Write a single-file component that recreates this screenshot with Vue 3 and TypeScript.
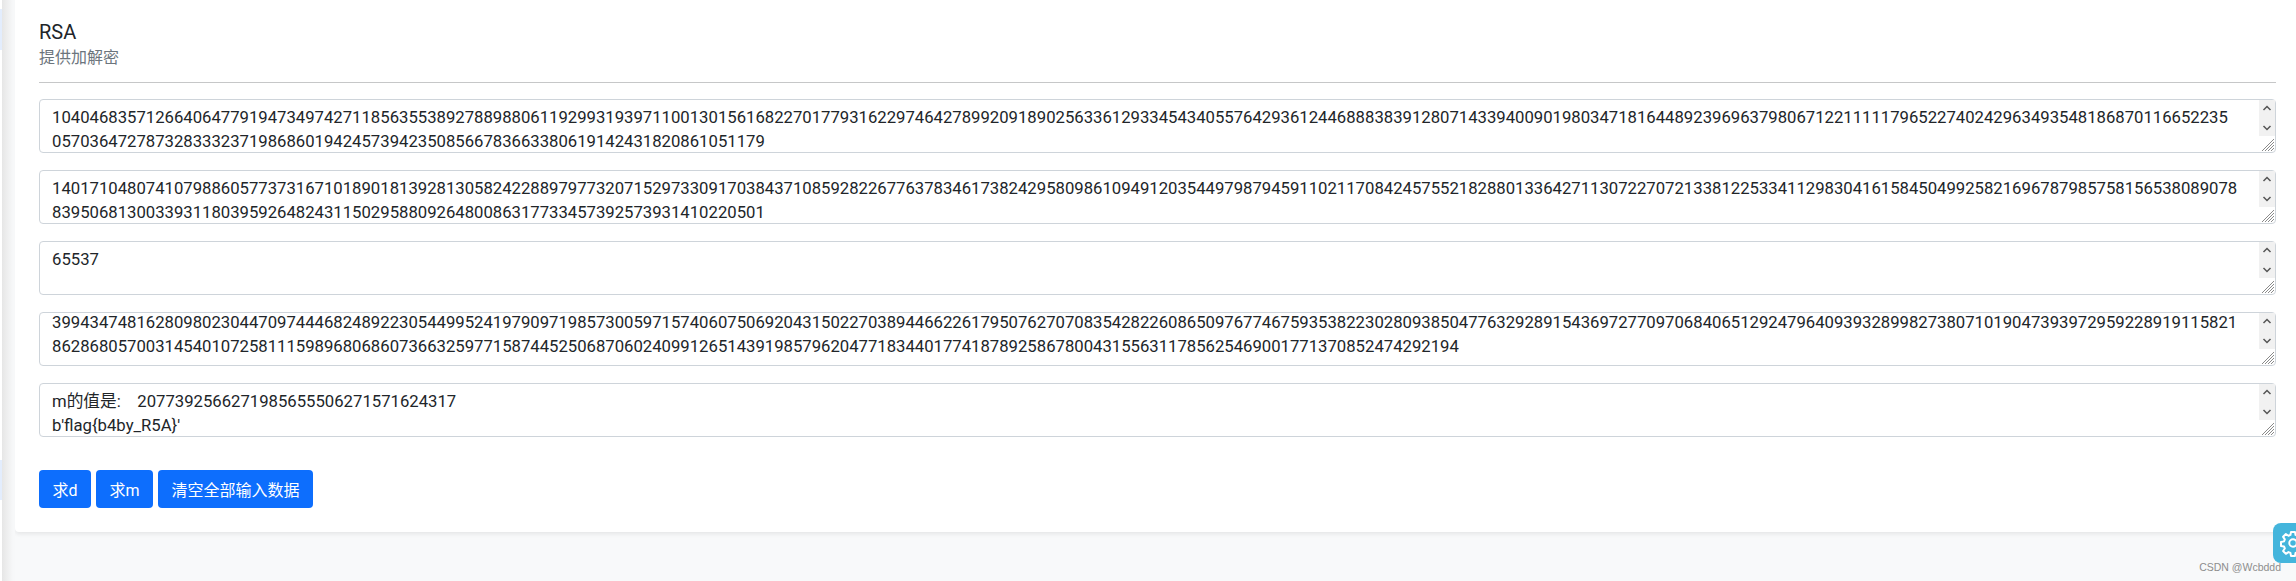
<template>
  <div class="page">
    <div class="side">
      <i class="mark first"></i>
      <i class="mark second"></i>
    </div>
    <main class="card">
      <h5 class="title">RSA</h5>
      <p class="sub">提供加解密</p>
      <hr class="line" />
      <div v-for="(box, i) in boxes" :key="i" class="box">
        <textarea
          :ref="(el) => setRef(el, i)"
          class="field"
          :value="box"
          readonly
          wrap="off"
        ></textarea>
        <svg class="bar" width="17" height="54" viewBox="0 0 17 54" aria-hidden="true">
          <rect y="1" width="16" height="36" fill="#f1f1f1" />
          <path d="M4.500 11 8 7.500 11.500 11M4.500 27 8 30.500 11.500 27" fill="none" stroke="#555" stroke-width="1.500" />
          <path d="M15 40 3 52M15 43 6 52M15 46 9 52M15 49 12 52" stroke="#8a8a8a" stroke-width="1" />
        </svg>
      </div>
      <div class="actions">
        <button class="btn">求d</button>
        <button class="btn">求m</button>
        <button class="btn">清空全部输入数据</button>
      </div>
    </main>
    <div class="gear">
      <svg width="28" height="28" viewBox="0 0 24 24" fill="none" stroke="#fff" stroke-width="1.700" stroke-linejoin="round">
        <circle cx="12" cy="12" r="3.200" />
        <path d="M10.300 2.500h3.400l.5 2.600 1.700.7 2.200-1.500 2.400 2.400-1.500 2.200.7 1.700 2.600.5v3.400l-2.600.5-.7 1.700 1.500 2.200-2.400 2.400-2.200-1.500-1.700.7-.5 2.600h-3.400l-.5-2.600-1.700-.7-2.200 1.500-2.400-2.400 1.500-2.200-.7-1.700-2.600-.5v-3.400l2.600-.5.700-1.700-1.500-2.200 2.400-2.400 2.200 1.500 1.700-.7z" />
      </svg>
    </div>
    <span class="mark-text">CSDN @Wcbddd</span>
  </div>
</template>

<script setup lang="ts">
import { onMounted } from 'vue';

const boxes = [
  '1040468357126640647791947349742711856355389278898806119299319397110013015616822701779316229746427899209189025633612933454340557642936124468883839128071433940090198034718164489239696379806712211111796522740242963493548186870116652235\n0570364727873283332371986860194245739423508566783663380619142431820861051179',
  '14017104807410798860577373167101890181392813058242288979773207152973309170384371085928226776378346173824295809861094912035449798794591102117084245755218288013364271130722707213381225334112983041615845049925821696787985758156538089078\n8395068130033931180395926482431150295880926480086317733457392573931410220501',
  '65537',
  '39943474816280980230447097444682489223054499524197909719857300597157406075069204315022703894466226179507627070835428226086509767746759353822302809385047763292891543697277097068406512924796409393289982738071019047393972959228919115821\n862868057003145401072581115989680686073663259771587445250687060240991265143919857962047718344017741878925867800431556311785625469001771370852474292194',
  "m的值是:    2077392566271985655506271571624317\nb'flag{b4by_R5A}'\n",
];

// the fourth box sits scrolled down a little in the screenshot
const fields: HTMLTextAreaElement[] = [];
const setRef = (el: unknown, i: number) => {
  if (el) fields[i] = el as HTMLTextAreaElement;
};

onMounted(() => {
  fields[3].scrollTop = 8;
});
</script>

<style>
html,
body {
  margin: 0;
  background: #f8f9fa;
  overflow: hidden;
}
</style>

<style scoped>
.page {
  display: flex;
  position: relative;
  height: 581px;
  overflow: hidden;
  font-family: Roboto, "Noto Sans CJK SC", sans-serif;
  color: #212529;
}

.side {
  width: 15px;
  flex: none;
  position: relative;
  background: linear-gradient(90deg, #fff 2px, #e6e6e6 2px, #f7f8f9 13px);
}

.mark {
  position: absolute;
  left: 0;
  width: 2px;
  background: #e3edfd;
}

.first {
  top: 9px;
  height: 41px;
}

.second {
  top: 460px;
  height: 40px;
}

.card {
  flex: 1;
  margin-right: -20px;
  height: 532px;
  box-sizing: border-box;
  padding: 20px 40px 24px 24px;
  background: #fff;
  border-radius: 0 0 4px 4px;
  box-shadow: 0 2px 4px rgba(0, 0, 0, 0.08);
}

.title {
  margin: 0;
  font-size: 20px;
  line-height: 24px;
  font-weight: 400;
}

.sub {
  margin: 2px 0 0;
  font-size: 16px;
  line-height: 24px;
  color: #6c757d;
}

.line {
  margin: 12px 0 16px;
  border: 0;
  border-top: 1px solid #c6c7c8;
}

.box {
  position: relative;
  margin-bottom: 17px;
  height: 54px;
}

.field {
  display: block;
  box-sizing: border-box;
  width: 100%;
  height: 54px;
  padding: 6px 12px;
  border: 1px solid #ced4da;
  border-radius: 4px;
  font: inherit;
  font-size: 16.7px;
  line-height: 24px;
  color: #212529;
  overflow: hidden;
  resize: none;
  outline: none;
}

.bar {
  position: absolute;
  top: 0;
  right: 0;
}

.actions {
  display: flex;
  gap: 5px;
  margin-top: 33px;
}

.btn {
  height: 38px;
  padding: 0 13.5px;
  border: 0;
  border-radius: 4px;
  background: #0d6efd;
  color: #fff;
  font: inherit;
  font-size: 16px;
}

.gear {
  position: absolute;
  right: 0;
  top: 523px;
  width: 23px;
  height: 40px;
  overflow: hidden;
  background: #44b5dc;
  border-radius: 8px 0 0 8px;
  display: flex;
  align-items: center;
  padding-left: 6px;
  box-sizing: border-box;
}

.gear svg {
  flex: none;
}

.mark-text {
  position: absolute;
  right: 15px;
  top: 561px;
  font-family: "Liberation Sans", sans-serif;
  font-size: 10.5px;
  line-height: 12px;
  color: #8d8d8d;
}
</style>
